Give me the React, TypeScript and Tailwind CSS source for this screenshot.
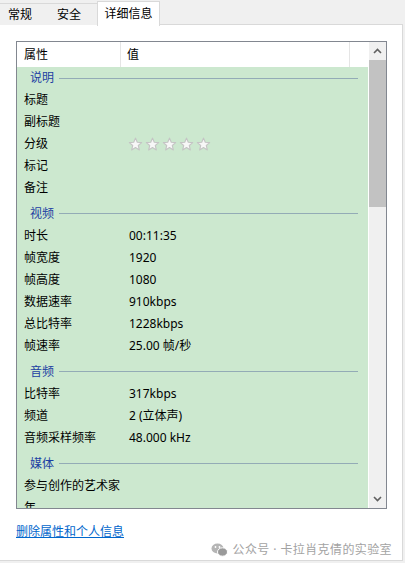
import React from 'react';

type Row = { label: string; value?: string; stars?: boolean };
type Group = { title: string; rows: Row[] };

const groups: Group[] = [
  {
    title: '说明',
    rows: [
      { label: '标题' },
      { label: '副标题' },
      { label: '分级', stars: true },
      { label: '标记' },
      { label: '备注' },
    ],
  },
  {
    title: '视频',
    rows: [
      { label: '时长', value: '00:11:35' },
      { label: '帧宽度', value: '1920' },
      { label: '帧高度', value: '1080' },
      { label: '数据速率', value: '910kbps' },
      { label: '总比特率', value: '1228kbps' },
      { label: '帧速率', value: '25.00 帧/秒' },
    ],
  },
  {
    title: '音频',
    rows: [
      { label: '比特率', value: '317kbps' },
      { label: '频道', value: '2 (立体声)' },
      { label: '音频采样频率', value: '48.000 kHz' },
    ],
  },
  {
    title: '媒体',
    rows: [{ label: '参与创作的艺术家' }, { label: '年' }],
  },
];

const Star = () => (
  <svg width="15" height="15" viewBox="0 0 16 16">
    <path
      d="M8 1.2l1.9 4.4 4.7.4-3.6 3.1 1.1 4.7L8 11.3l-4.1 2.5 1.1-4.7L1.4 6l4.7-.4z"
      fill="#f7f7f7"
      stroke="#c4c4c4"
      strokeWidth="1.2"
      strokeLinejoin="round"
    />
  </svg>
);

const Tab = ({ label, active }: { label: string; active?: boolean }) =>
  active ? (
    <div className="h-[25px] w-[63px] flex items-center justify-center bg-white border border-b-0 border-[#d9d9d9] -mb-px relative z-10">
      {label}
    </div>
  ) : (
    <div className="h-[22px] px-[8px] flex items-center bg-[#f0f0f0] border border-b-0 border-r-0 border-[#d9d9d9] first:border-l-0">
      {label}
    </div>
  );

export default function App() {
  return (
    <div
      className="w-[405px] h-[563px] bg-[#f0f0f0] text-[12px] text-black overflow-hidden"
      style={{ fontFamily: '"Noto Sans", "Noto Sans CJK SC", sans-serif' }}
    >
      <div className="flex items-end h-[25px]">
        <div className="w-[49px]"><Tab label="常规" /></div>
        <div className="w-[48px]"><Tab label="安全" /></div>
        <Tab label="详细信息" active />
      </div>

      <div className="w-[403px] h-[537px] -mt-px bg-white border border-l-0 border-[#d9d9d9] pt-[16px] pl-[16px] flex flex-col">
        {/* property list */}
        <div className="w-[371px] h-[468px] border border-[#828790] flex">
          <div className="w-[352px] flex flex-col overflow-hidden">
            <div className="h-[25px] flex shrink-0 bg-white leading-[25px]">
              <div className="w-[104px] pl-[7px] border-r border-[#e5e5e5]">属性</div>
              <div className="w-[229px] pl-[6px] border-r border-[#e5e5e5]">值</div>
              <div className="flex-1" />
            </div>
            <div className="flex-1 bg-[#cce8cf] mr-px overflow-hidden">
              {groups.map((g, gi) => (
                <div key={g.title} className={gi === 0 ? '' : 'mt-[3px]'}>
                  <div
                    className={`${gi === 0 ? 'h-[22px]' : 'h-[23px]'} flex items-center pl-[13px] pr-[10px] gap-[5px]`}
                  >
                    <span className="text-[#1c3fa3]">{g.title}</span>
                    <div className="flex-1 h-px bg-[#93abb6]" />
                  </div>
                  {g.rows.map((r) => (
                    <div key={r.label} className="h-[22px] flex items-center">
                      <div className="w-[112px] pl-[7px]">{r.label}</div>
                      {r.stars ? (
                        <div className="flex gap-[2px] -ml-[1px]">
                          <Star />
                          <Star />
                          <Star />
                          <Star />
                          <Star />
                        </div>
                      ) : (
                        <div>{r.value}</div>
                      )}
                    </div>
                  ))}
                </div>
              ))}
            </div>
          </div>

          {/* scrollbar */}
          <div className="w-[17px] bg-[#f0f0f0] flex flex-col">
            <div className="h-[18px] flex items-center justify-center">
              <svg width="9" height="6" viewBox="0 0 9 6">
                <path d="M1 5l3.5-3.5L8 5" fill="none" stroke="#606060" strokeWidth="1.6" />
              </svg>
            </div>
            <div className="h-[147px] bg-[#c2c2c2]" />
            <div className="flex-1" />
            <div className="h-[18px] flex items-center justify-center">
              <svg width="9" height="6" viewBox="0 0 9 6">
                <path d="M1 1l3.5 3.5L8 1" fill="none" stroke="#606060" strokeWidth="1.6" />
              </svg>
            </div>
          </div>
        </div>

        <div className="mt-[14px] leading-[18px]">
          <a className="text-[#0066cc] underline">删除属性和个人信息</a>
        </div>

        <div className="flex items-center justify-end gap-[5px] pr-[10px] mt-[1px] text-[#a3a3a3] leading-[16px] tracking-[0.4px]">
          <svg width="17" height="14" viewBox="0 0 17 14">
            <ellipse cx="6.5" cy="5.5" rx="6" ry="5" fill="#b5b5b5" />
            <ellipse cx="11.5" cy="9" rx="5" ry="4.2" fill="#9a9a9a" stroke="#fff" strokeWidth="1" />
            <circle cx="4.5" cy="4" r="0.9" fill="#fff" />
            <circle cx="8.5" cy="4" r="0.9" fill="#fff" />
          </svg>
          <span>公众号 · 卡拉肖克倩的实验室</span>
        </div>
      </div>
    </div>
  );
}
